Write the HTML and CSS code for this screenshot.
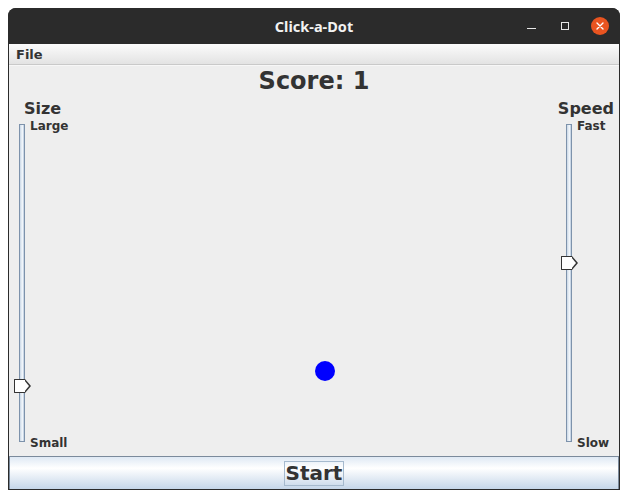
FILE: index.html
```html
<!DOCTYPE html>
<html lang="en">
<head>
    <meta charset="UTF-8">
    <title>Click-a-Dot</title>
    <link rel="stylesheet" href="styles.css">
</head>
<body>
    <div class="window">
        <div class="titlebar">
            <span class="title">Click-a-Dot</span>
            <div class="win-buttons">
                <span class="win-btn min"></span>
                <span class="win-btn max"></span>
                <span class="win-btn close">
                    <svg width="18" height="18" viewBox="0 0 18 18">
                        <circle cx="9" cy="9" r="9" fill="#e95420"/>
                        <path d="M6 6 L12 12 M12 6 L6 12" stroke="#fff" stroke-width="1.4" stroke-linecap="round"/>
                    </svg>
                </span>
            </div>
        </div>
        <div class="menubar">
            <span class="menu-item">File</span>
        </div>
        <div class="content">
            <div class="score">Score: 1</div>
            <div class="play-row">
                <div class="slider-col left">
                    <div class="slider-title">Size</div>
                    <div class="slider">
                        <div class="track">
                            <div class="thumb" style="top: 254px"></div>
                        </div>
                        <div class="ticks">
                            <span>Large</span>
                            <span>Small</span>
                        </div>
                    </div>
                </div>
                <div class="canvas">
                    <div class="dot" style="left: 239px; top: 265px"></div>
                </div>
                <div class="slider-col right">
                    <div class="slider-title">Speed</div>
                    <div class="slider">
                        <div class="track">
                            <div class="thumb" style="top: 131px"></div>
                        </div>
                        <div class="ticks">
                            <span>Fast</span>
                            <span>Slow</span>
                        </div>
                    </div>
                </div>
            </div>
            <div class="start-bar">
                <span class="start-label">Start</span>
            </div>
        </div>
    </div>
</body>
</html>
```

FILE: styles.css
```css
body {
    margin: 0;
    background: #ffffff;
    font-family: 'DejaVu Sans', sans-serif;
}
.window {
    margin: 8px 0 0 8px;
    width: 612px;
    height: 482px;
    display: flex;
    flex-direction: column;
    border-radius: 8px 8px 0 0;
    overflow: hidden;
    background: #2b2b2b;
}
.titlebar {
    height: 36px;
    flex: none;
    position: relative;
    display: flex;
    align-items: center;
    justify-content: center;
    background: #2b2b2b;
}
.title {
    font-family: 'Noto Sans', sans-serif;
    font-weight: bold;
    font-size: 14.5px;
    color: #f2f2f2;
}
.win-buttons {
    position: absolute;
    right: 11px;
    top: 9px;
    display: flex;
    align-items: center;
    gap: 16px;
}
.win-btn {
    display: block;
    width: 18px;
    height: 18px;
    position: relative;
}
.win-btn.min::after {
    content: '';
    position: absolute;
    left: 4px;
    top: 11px;
    width: 9px;
    height: 1px;
    background: #e8e8e8;
}
.win-btn.max::after {
    content: '';
    position: absolute;
    left: 4px;
    top: 5px;
    width: 6px;
    height: 6px;
    border: 1px solid #e8e8e8;
}
.win-btn.close svg {
    display: block;
}
.menubar {
    height: 19px;
    flex: none;
    display: flex;
    align-items: center;
    padding-left: 7px;
    padding-top: 1px;
    margin: 0 1px;
    background: linear-gradient(#fbfbfb, #e3e3e3);
    border-bottom: 1px solid #c9c9c9;
}
.menu-item {
    font-weight: bold;
    font-size: 13px;
    color: #333333;
}
.content {
    flex: 1;
    display: flex;
    flex-direction: column;
    margin: 0 1px 1px;
    background: #eeeeee;
    border-top: 1px solid #f7f7f7;
}
.score {
    height: 30px;
    flex: none;
    display: flex;
    align-items: center;
    justify-content: center;
    font-weight: bold;
    font-size: 24px;
    color: #333333;
}
.play-row {
    flex: 1;
    display: flex;
}
.slider-col {
    flex: none;
    display: flex;
    flex-direction: column;
    padding-top: 3px;
}
.slider-col.left {
    width: 57px;
    padding-left: 10px;
}
.slider-col.right {
    width: 53px;
    padding-left: 5px;
}
.slider-title {
    height: 20px;
    line-height: 20px;
    font-weight: bold;
    font-size: 16px;
    color: #333333;
    white-space: nowrap;
}
.slider-col.left .slider-title {
    padding-left: 5px;
}
.slider-col.right .slider-title {
    margin-left: -12px;
    padding-right: 5px;
    text-align: right;
}
.slider {
    display: flex;
    height: 331px;
}
.track {
    position: relative;
    width: 4px;
    height: 316px;
    margin-top: 5px;
    border: 1px solid #7d92ab;
    background: linear-gradient(90deg, #c9d7e6, #f4f8fc 60%, #b7c8dc);
}
.thumb {
    position: absolute;
    left: -6px;
    width: 10px;
    height: 12px;
    background: #ffffff;
    border: 1px solid #333333;
    border-right: none;
    border-radius: 1px 0 0 1px;
}
.thumb::after {
    content: '';
    position: absolute;
    left: 10px;
    top: -1px;
    width: 0;
    height: 0;
    border-top: 7px solid transparent;
    border-bottom: 7px solid transparent;
    border-left: 6px solid #333333;
}
.thumb::before {
    content: '';
    position: absolute;
    left: 9px;
    top: 0;
    width: 0;
    height: 0;
    border-top: 6px solid transparent;
    border-bottom: 6px solid transparent;
    border-left: 5px solid #ffffff;
    z-index: 1;
}
.ticks {
    display: flex;
    flex-direction: column;
    justify-content: space-between;
    margin-left: 5px;
    font-weight: bold;
    font-size: 12px;
    line-height: 14px;
    color: #333333;
}
.canvas {
    flex: 1;
    position: relative;
}
.dot {
    position: absolute;
    width: 20px;
    height: 20px;
    border-radius: 50%;
    background: #0000ff;
}
.start-bar {
    height: 32px;
    flex: none;
    display: flex;
    align-items: center;
    justify-content: center;
    border: 1px solid #7b8a9b;
    border-bottom: none;
    background: linear-gradient(#dfe9f4, #ffffff 35%, #c5d6e9);
}
.start-label {
    font-weight: bold;
    font-size: 20px;
    line-height: 23px;
    padding: 0 1px;
    color: #333333;
    border: 1px solid #a6bace;
}
```
